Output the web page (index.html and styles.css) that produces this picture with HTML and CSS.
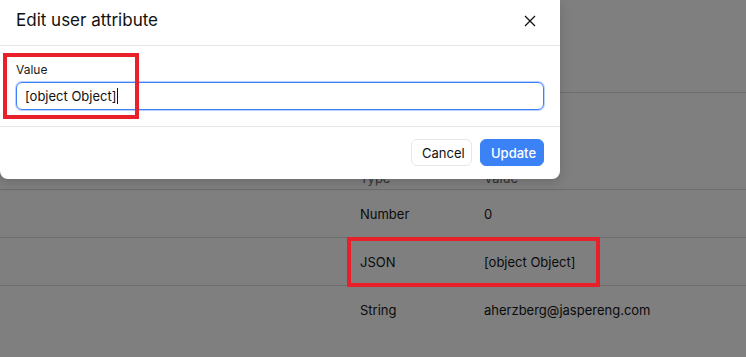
FILE: index.html
```html
<!DOCTYPE html>
<html>
<head>
<meta charset="utf-8">
<link rel="stylesheet" href="styles.css">
</head>
<body>
<div class="page">
  <div class="top-area"></div>
  <div class="row head"><span></span><span>Type</span><span>Value</span></div>
  <div class="row"><span></span><span>Number</span><span>0</span></div>
  <div class="row"><span></span><span>JSON</span><span>[object Object]</span></div>
  <div class="row last"><span></span><span>String</span><span>aherzberg@jaspereng.com</span></div>
</div>
<div class="overlay"></div>
<div class="modal">
  <div class="modal-header">
    <h2 class="modal-title">Edit user attribute</h2>
    <svg class="close" width="12" height="12" viewBox="0 0 12 12"><path d="M1 1 L11 11 M11 1 L1 11" stroke="#111" stroke-width="1.3" fill="none"/></svg>
  </div>
  <div class="modal-body">
    <label class="label">Value</label>
    <div class="input"><span>[object Object]</span><span class="caret"></span></div>
  </div>
  <div class="modal-footer">
    <button class="btn btn-cancel">Cancel</button>
    <button class="btn btn-primary">Update</button>
  </div>
</div>
<div class="annot annot-1"></div>
<div class="annot annot-2"></div>
</body>
</html>
```
FILE: styles.css
```css
* { box-sizing: border-box; }
html, body { margin: 0; padding: 0; }
body {
  width: 746px;
  height: 357px;
  overflow: hidden;
  background: #fff;
  font-family: Inter, "Liberation Sans", sans-serif;
  color: #111;
  position: relative;
}
.page { width: 746px; }
.top-area { height: 93px; border-bottom: 1px solid #d9d9d9; }
.row {
  display: grid;
  grid-template-columns: 360px 124px 1fr;
  height: 48px;
  align-items: center;
  border-bottom: 1px solid #d9d9d9;
  font-size: 13px;
  color: #141414;
}
.row.last { border-bottom: none; }
.row.head {
  height: 97px;
  align-items: end;
  padding-bottom: 3px;
  color: #6b6b6b;
}
.overlay {
  position: absolute;
  inset: 0;
  background: rgba(0, 0, 0, 0.5);
}
.modal {
  position: absolute;
  top: 0;
  left: 0;
  width: 560px;
  height: 179px;
  background: #fff;
  border-radius: 0 0 8px 8px;
  box-shadow: 0 4px 12px rgba(0, 0, 0, 0.15);
  display: flex;
  flex-direction: column;
}
.modal-header {
  height: 46px;
  border-bottom: 1px solid #e5e5e5;
  display: flex;
  align-items: center;
  justify-content: space-between;
  padding: 0 24px 6px 16px;
}
.modal-title {
  margin: 0;
  font-size: 17px;
  font-weight: 400;
  color: #111;
}
.close { margin-top: 2px; }
.modal-body {
  height: 81px;
  border-bottom: 1px solid #e5e5e5;
  padding: 17px 16px 0 16px;
}
.label {
  display: block;
  font-size: 12px;
  color: #1a1a1a;
  margin-bottom: 5px;
  line-height: 14px;
}
.input {
  height: 28px;
  border: 1px solid #3b82f6;
  border-radius: 6px;
  box-shadow: 0 0 0 1px rgba(59, 130, 246, 0.35);
  display: flex;
  align-items: center;
  padding-left: 8px;
  font-size: 13px;
  color: #111;
}
.caret {
  display: inline-block;
  width: 1px;
  height: 16px;
  background: #111;
  margin-left: 1px;
}
.modal-footer {
  flex: 1;
  display: flex;
  justify-content: flex-end;
  align-items: flex-start;
  gap: 8px;
  padding: 12px 16px 0 0;
}
.btn {
  height: 27px;
  border-radius: 6px;
  font-family: Inter, "Liberation Sans", sans-serif;
  font-size: 13px;
  padding: 0 10px;
  cursor: pointer;
}
.btn-cancel {
  width: 61px;
  background: #fff;
  border: 1px solid #e5e7eb;
  color: #111;
}
.btn-primary {
  width: 64px;
  background: #3b82f6;
  border: 1px solid #3b82f6;
  color: #fff;
  font-weight: 500;
}
.annot {
  position: absolute;
  border: 4px solid #e8202a;
}
.annot-1 { left: 3px; top: 53px; width: 136px; height: 66px; }
.annot-2 { left: 347px; top: 237px; width: 253px; height: 50px; }
```
